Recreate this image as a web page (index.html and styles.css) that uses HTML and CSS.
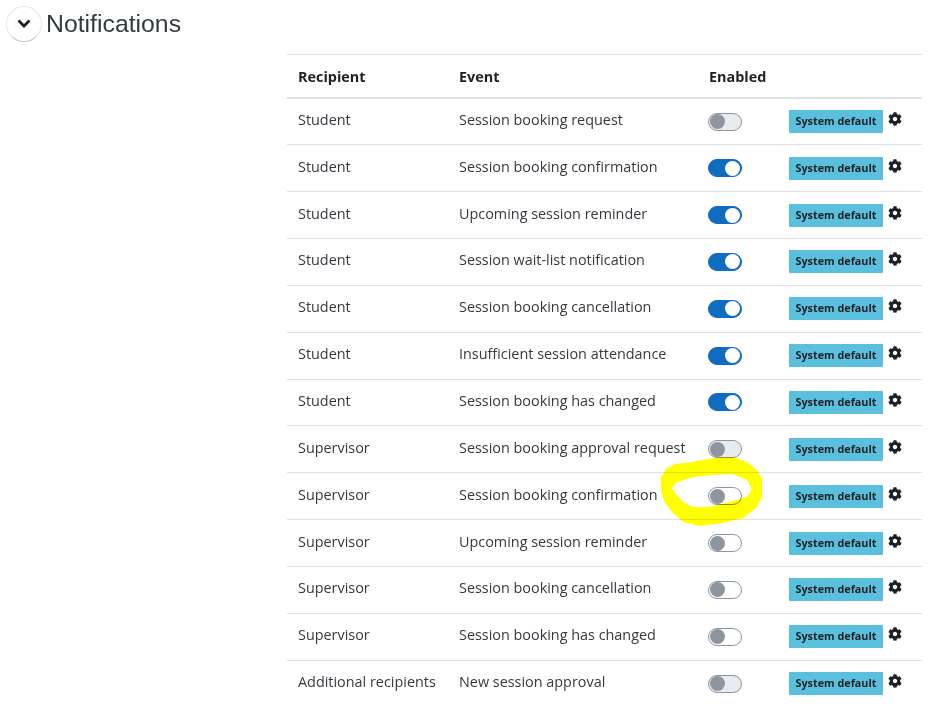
FILE: index.html
```html
<!DOCTYPE html>
<html lang="en">
<head>
<meta charset="utf-8">
<title>Notifications</title>
<link rel="stylesheet" href="styles.css">
</head>
<body>
<header class="head">
  <button class="collapse" type="button" aria-label="Collapse">
    <svg width="14" height="10" viewBox="0 0 14 10"><path d="M1.500 1.500L7 7l5.500-5.500" fill="none" stroke="#1d2125" stroke-width="2.800"/></svg>
  </button>
  <h2 class="title">Notifications</h2>
</header>
<div class="wrap">
<table class="grid">
  <thead>
    <tr><th class="c1">Recipient</th><th class="c2">Event</th><th class="c3">Enabled</th><th class="c4"></th></tr>
  </thead>
  <tbody>
    <tr><td>Student</td><td>Session booking request</td><td><span class="sw"></span></td><td><span class="badge">System default</span><svg class="cog" viewBox="0 0 512 512"><use href="#gear"/></svg></td></tr>
    <tr><td>Student</td><td>Session booking confirmation</td><td><span class="sw on"></span></td><td><span class="badge">System default</span><svg class="cog" viewBox="0 0 512 512"><use href="#gear"/></svg></td></tr>
    <tr><td>Student</td><td>Upcoming session reminder</td><td><span class="sw on"></span></td><td><span class="badge">System default</span><svg class="cog" viewBox="0 0 512 512"><use href="#gear"/></svg></td></tr>
    <tr><td>Student</td><td>Session wait-list notification</td><td><span class="sw on"></span></td><td><span class="badge">System default</span><svg class="cog" viewBox="0 0 512 512"><use href="#gear"/></svg></td></tr>
    <tr><td>Student</td><td>Session booking cancellation</td><td><span class="sw on"></span></td><td><span class="badge">System default</span><svg class="cog" viewBox="0 0 512 512"><use href="#gear"/></svg></td></tr>
    <tr><td>Student</td><td>Insufficient session attendance</td><td><span class="sw on"></span></td><td><span class="badge">System default</span><svg class="cog" viewBox="0 0 512 512"><use href="#gear"/></svg></td></tr>
    <tr><td>Student</td><td>Session booking has changed</td><td><span class="sw on"></span></td><td><span class="badge">System default</span><svg class="cog" viewBox="0 0 512 512"><use href="#gear"/></svg></td></tr>
    <tr><td>Supervisor</td><td>Session booking approval request</td><td><span class="sw"></span></td><td><span class="badge">System default</span><svg class="cog" viewBox="0 0 512 512"><use href="#gear"/></svg></td></tr>
    <tr><td>Supervisor</td><td>Session booking confirmation</td><td><span class="sw off-white"></span></td><td><span class="badge">System default</span><svg class="cog" viewBox="0 0 512 512"><use href="#gear"/></svg></td></tr>
    <tr><td>Supervisor</td><td>Upcoming session reminder</td><td><span class="sw off-white"></span></td><td><span class="badge">System default</span><svg class="cog" viewBox="0 0 512 512"><use href="#gear"/></svg></td></tr>
    <tr><td>Supervisor</td><td>Session booking cancellation</td><td><span class="sw off-white"></span></td><td><span class="badge">System default</span><svg class="cog" viewBox="0 0 512 512"><use href="#gear"/></svg></td></tr>
    <tr><td>Supervisor</td><td>Session booking has changed</td><td><span class="sw off-white"></span></td><td><span class="badge">System default</span><svg class="cog" viewBox="0 0 512 512"><use href="#gear"/></svg></td></tr>
    <tr><td>Additional recipients</td><td>New session approval</td><td><span class="sw"></span></td><td><span class="badge">System default</span><svg class="cog" viewBox="0 0 512 512"><use href="#gear"/></svg></td></tr>
  </tbody>
</table>
</div>
<svg class="defs" width="0" height="0"><defs><path id="gear" fill="#1d2125" d="M487.400 315.700l-42.600-24.600c4.300-23.200 4.300-47 0-70.200l42.600-24.600c4.900-2.800 7.100-8.600 5.500-14-11.100-35.600-30-67.800-54.700-94.600-3.800-4.100-10-5.100-14.800-2.300L380.800 110c-17.900-15.400-38.500-27.300-60.800-35.100V25.800c0-5.600-3.900-10.500-9.400-11.700-36.700-8.200-74.300-7.800-109.200 0-5.500 1.200-9.400 6.100-9.400 11.700V75c-22.200 7.900-42.800 19.800-60.800 35.100L88.700 85.500c-4.900-2.800-11-1.900-14.800 2.300-24.700 26.700-43.600 58.900-54.700 94.600-1.700 5.400.6 11.200 5.500 14L67.300 221c-4.300 23.200-4.300 47 0 70.200l-42.600 24.600c-4.900 2.800-7.100 8.600-5.500 14 11.100 35.600 30 67.800 54.700 94.600 3.800 4.100 10 5.100 14.800 2.300l42.600-24.600c17.900 15.400 38.500 27.300 60.800 35.100v49.200c0 5.600 3.900 10.500 9.400 11.700 36.700 8.200 74.300 7.800 109.200 0 5.500-1.200 9.400-6.100 9.400-11.700v-49.200c22.200-7.900 42.800-19.800 60.800-35.100l42.600 24.600c4.900 2.800 11 1.900 14.800-2.300 24.700-26.700 43.600-58.900 54.700-94.600 1.500-5.500-.7-11.300-5.600-14.100zM256 336c-44.100 0-80-35.900-80-80s35.900-80 80-80 80 35.900 80 80-35.900 80-80 80z"/></defs></svg>
<svg class="scribble" width="111" height="79" viewBox="0 0 111 79" aria-hidden="true">
  <path fill="#ffff00" fill-rule="evenodd" d="M3 22L9 13 17 9 35 7 55 3 75 2 89 7 99 15 104 23 104 42 99 52 85 63 65 68 42 71 25 67 15 58 7 48 3 35zM14 33L19 27 35 22 55 20 75 19 89 25 94 34 89 42 72 47 52 52 35 52 25 47 17 38z"/>
</svg>
</body>
</html>
```
FILE: styles.css
```css
html, body { margin: 0; padding: 0; }
body {
  position: relative;
  width: 931px;
  height: 721px;
  overflow: hidden;
  background: #fff;
  color: #1d2125;
  font-family: "Open Sans", sans-serif;
  font-size: 14.4px;
}
.head {
  display: flex;
  align-items: center;
  gap: 4px;
  padding: 6px 0 0 6px;
  height: 36px;
}
.collapse {
  width: 36px;
  height: 36px;
  padding: 0;
  display: flex;
  align-items: center;
  justify-content: center;
  background: #fff;
  border: 1px solid #e8e8e8;
  border-bottom-color: #c4c4c4;
  border-radius: 50%;
}
.title {
  margin: 0;
  font-family: "Liberation Sans", sans-serif;
  font-size: 24.8px;
  font-weight: 400;
  line-height: 30px;
  color: #343a40;
}
.wrap { padding: 12px 9px 0 287px; }
.grid {
  width: 635px;
  border-collapse: collapse;
  table-layout: fixed;
}
th, td { box-sizing: border-box; }
.c1 { width: 161px; }
.c2 { width: 250px; }
.c3 { width: 80px; }
th {
  height: 43.500px;
  padding: 0 0 0 11px;
  text-align: left;
  font-weight: 700;
  border-top: 1px solid #dee2e6;
  border-bottom: 2px solid #dee2e6;
}
td {
  height: 46.850px;
  padding: 0 0 4px 11px;
  border-bottom: 1px solid #dee2e6;
  color: #343a40;
  white-space: nowrap;
}
tbody tr:last-child td { border-bottom: 0; }
td:nth-child(3) { padding: 0 0 0 10px; }
td:nth-child(4) { padding: 0 0 0 11px; }
.sw {
  position: relative;
  display: block;
  box-sizing: border-box;
  width: 34px;
  height: 18px;
  border: 1px solid #8f959e;
  border-radius: 9px;
  background: #e9ecef;
}
.sw::after {
  content: "";
  position: absolute;
  left: 1px;
  top: 0.500px;
  width: 15px;
  height: 15px;
  border-radius: 50%;
  background: #8f959e;
}
.sw.on { background: #0f6cbf; border-color: #0f6cbf; }
.sw.on::after { left: auto; right: 1px; background: #fff; }
.sw.off-white { background: #fff; }
.badge {
  display: inline-block;
  box-sizing: border-box;
  width: 94px;
  height: 23px;
  line-height: 22px;
  text-align: center;
  background: #5bc0de;
  color: #1d2125;
  font-size: 10.8px;
  font-weight: 700;
  vertical-align: middle;
}
.cog {
  width: 14px;
  height: 14px;
  margin: 0 0 5px 5px;
  vertical-align: middle;
}
.defs { position: absolute; }
.scribble {
  position: absolute;
  left: 658px;
  top: 455px;
  mix-blend-mode: multiply;
}
```
